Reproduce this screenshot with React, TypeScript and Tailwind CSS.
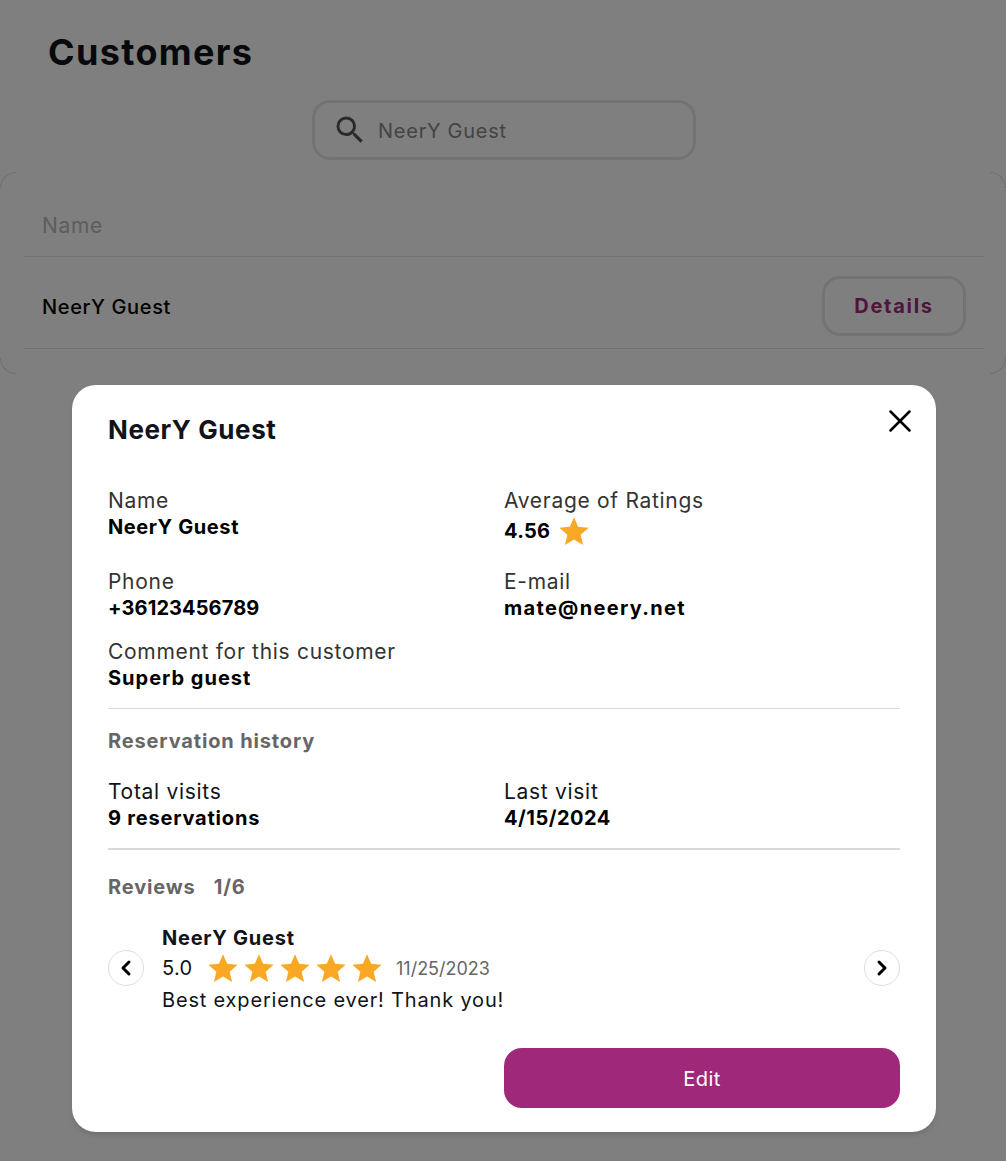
import React from "react";
import { X, ChevronLeft, ChevronRight } from "lucide-react";

const font = { fontFamily: "Inter, 'Noto Sans', sans-serif" };

function Star({ size = 32 }: { size?: number }) {
  return (
    <svg width={size} height={size} viewBox="0 0 24 24" className="shrink-0">
      <path d="M12 1.6l3.1 7.3 7.9.7-6 5.2 1.8 7.7L12 18.4l-6.8 4.1L7 14.8 1 9.6l7.9-.7z" fill="#F9A826" />
    </svg>
  );
}

function Field({
  label,
  value,
  labelColor = "text-[#333333]",
  valueClass,
}: {
  label: string;
  value: React.ReactNode;
  labelColor?: string;
  valueClass: string;
}) {
  return (
    <div className="flex flex-col">
      <span className={`text-[21px] leading-[27px] tracking-[0.7px] ${labelColor}`}>{label}</span>
      <span className={`text-[20px] leading-[27px] font-bold text-[#000000] ${valueClass}`}>{value}</span>
    </div>
  );
}

export default function App() {
  return (
    <div className="relative w-[1006px] h-[1161px] overflow-hidden bg-white" style={font}>
      <div className="flex flex-col">
        <h1 className="pl-12 pt-[31px] text-[36px] leading-[42px] font-bold text-[#111318] tracking-[1.35px]">Customers</h1>
        <div className="flex justify-center pt-[27px] pl-[2px]">
          <div className="flex items-center w-[384px] h-[60px] rounded-[18px] border-[3px] border-[#e6e6e6] pl-[17px] gap-[10px]">
            <svg width="36" height="36" viewBox="0 0 24 24" fill="#555555" className="shrink-0">
              <path d="M15.5 14h-.79l-.28-.27A6.47 6.47 0 0 0 16 9.5 6.5 6.5 0 1 0 9.5 16c1.61 0 3.09-.59 4.23-1.57l.27.28v.79l5 4.99L20.49 19l-4.99-5zm-6 0C7.01 14 5 11.99 5 9.5S7.01 5 9.5 5 14 7.01 14 9.5 11.99 14 9.5 14z" />
            </svg>
            <span className="text-[20px] text-[#888888] tracking-[0.75px] pt-[1px]">NeerY Guest</span>
          </div>
        </div>
        <div className="relative mt-[12px] h-[202px] pl-[24px] pr-[22px]">
          <span className="absolute top-0 left-0 w-[16px] h-[16px] rounded-tl-[16px] border-t border-l border-[#dddddd]" />
          <span className="absolute top-0 right-0 w-[16px] h-[16px] rounded-tr-[16px] border-t border-r border-[#dddddd]" />
          <span className="absolute bottom-0 left-0 w-[16px] h-[16px] rounded-bl-[16px] border-b border-l border-[#dddddd]" />
          <span className="absolute bottom-0 right-0 w-[16px] h-[16px] rounded-br-[16px] border-b border-r border-[#dddddd]" />
          <div className="h-[85px] border-b border-[#e2e2e2] flex items-center pl-[18px] pt-[23px]">
            <span className="text-[21px] text-[#bbbbbb] tracking-[0.7px]">Name</span>
          </div>
          <div className="h-[92px] border-b border-[#e2e2e2] flex items-center justify-between pl-[18px] pr-[18px] pt-[6px]">
            <span className="text-[20px] font-medium text-[#000000] tracking-[0.65px] pt-[2px]">NeerY Guest</span>
            <div className="flex items-center justify-center w-[144px] h-[60px] rounded-[18px] border-[3px] border-[#e6e6e6] text-[20px] font-bold text-[#A0287A] tracking-[1.7px] pt-[1px]">
              Details
            </div>
          </div>
        </div>
      </div>

      <div className="absolute inset-0 bg-black/50 flex justify-center items-start pt-[385px] pl-[2px]">
        <div className="w-[864px] bg-white rounded-[24px] px-[36px] pb-[24px] shadow-md relative flex flex-col">
          <button className="absolute top-[17px] right-[17px] text-black">
            <X size={38} strokeWidth={1.6} />
          </button>
          <h2 className="pt-[27px] text-[26px] leading-[36px] font-bold text-[#111318] tracking-[0.6px]">NeerY Guest</h2>

          <div className="grid grid-cols-2 mt-[39px]">
            <Field label="Name" value="NeerY Guest" valueClass="tracking-[0.6px]" />
            <div className="flex flex-col">
              <span className="text-[21px] leading-[27px] tracking-[0.7px] text-[#333333]">Average of Ratings</span>
              <span className="flex items-center gap-[8px] h-[34px]">
                <span className="text-[20px] font-bold text-black tracking-[0.3px]">4.56</span>
                <Star />
              </span>
            </div>
          </div>
          <div className="grid grid-cols-2 mt-[20px]">
            <Field label="Phone" value="+36123456789" valueClass="tracking-[0.1px]" />
            <Field label="E-mail" value="mate@neery.net" valueClass="tracking-[1.3px]" />
          </div>
          <div className="mt-[16px] pb-[16px] border-b border-[#d9d9d9]">
            <Field label="Comment for this customer" value="Superb guest" valueClass="tracking-[1px]" />
          </div>

          <h3 className="mt-[17px] text-[20px] leading-[30px] font-bold text-[#666666] tracking-[0.85px]">Reservation history</h3>
          <div className="grid grid-cols-2 mt-[22px] pb-[16px] border-b-2 border-[#d9d9d9]">
            <Field label="Total visits" value="9 reservations" labelColor="text-[#111318]" valueClass="tracking-[0.8px]" />
            <Field label="Last visit" value="4/15/2024" labelColor="text-[#111318]" valueClass="tracking-[0.5px]" />
          </div>

          <div className="mt-[22px] flex gap-[18px] text-[20px] leading-[30px] font-bold text-[#666666] tracking-[0.85px]">
            <span>Reviews</span>
            <span>1/6</span>
          </div>

          <div className="mt-[24px] flex items-start justify-between">
            <div className="flex items-start gap-[18px]">
              <button className="mt-[24px] w-[36px] h-[36px] rounded-full border border-[#dddddd] flex items-center justify-center text-black">
                <ChevronLeft size={24} strokeWidth={3} />
              </button>
              <div className="flex flex-col">
                <span className="text-[20px] leading-[24px] font-bold text-[#111318] tracking-[0.75px]">NeerY Guest</span>
                <div className="flex items-center h-[36px]">
                  <span className="text-[20px] text-[#111318] w-[45px] tracking-[0.3px]">5.0</span>
                  <span className="flex gap-[4px]">
                    <Star /><Star /><Star /><Star /><Star />
                  </span>
                  <span className="ml-[13px] text-[18px] text-[#666666]">11/25/2023</span>
                </div>
                <span className="text-[20px] leading-[27px] text-[#111318] tracking-[0.82px] pt-[1px]">Best experience ever! Thank you!</span>
              </div>
            </div>
            <button className="mt-[24px] w-[36px] h-[36px] rounded-full border border-[#dddddd] flex items-center justify-center text-black">
              <ChevronRight size={24} strokeWidth={3} />
            </button>
          </div>

          <div className="grid grid-cols-2 mt-[34px]">
            <div />
            <button className="h-[60px] rounded-[18px] bg-[#A0287A] text-white text-[20px] tracking-[0.4px] pt-[1px]">Edit</button>
          </div>
        </div>
      </div>
    </div>
  );
}
